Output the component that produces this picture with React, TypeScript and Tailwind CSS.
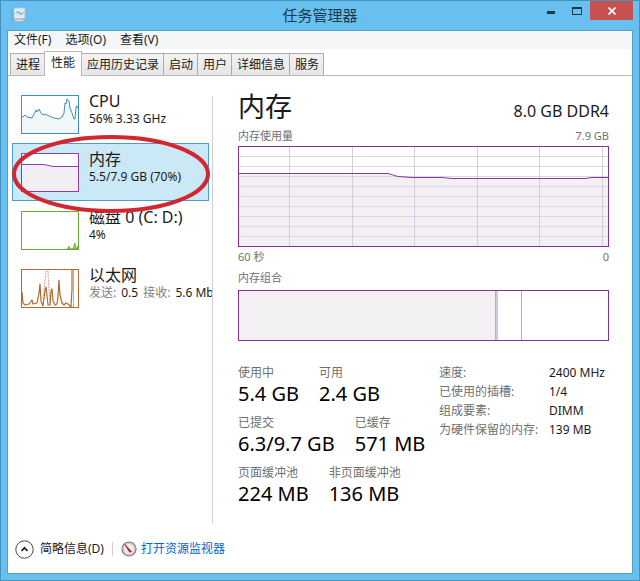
import type { ReactNode } from "react";

const menus = ["文件(F)", "选项(O)", "查看(V)"];

const tabs = ["进程", "性能", "应用历史记录", "启动", "用户", "详细信息", "服务"];

const stats = [
  [
    { label: "使用中", value: "5.4 GB" },
    { label: "可用", value: "2.4 GB" },
  ],
  [
    { label: "已提交", value: "6.3/9.7 GB" },
    { label: "已缓存", value: "571 MB" },
  ],
  [
    { label: "页面缓冲池", value: "224 MB" },
    { label: "非页面缓冲池", value: "136 MB" },
  ],
];

const details = [
  ["速度:", "2400 MHz"],
  ["已使用的插槽:", "1/4"],
  ["组成要素:", "DIMM"],
  ["为硬件保留的内存:", "139 MB"],
];

const AppIcon = () => (
  <svg width="16" height="16" viewBox="0 0 16 16" fill="none">
    <path d="M1.500 4v10M3.500 6v8" stroke="#7f97a5" strokeDasharray="2 1" />
    <path d="M4 12h9l1 2.500H5z" fill="#d5dadd" stroke="#9aa7ae" strokeWidth="0.6" />
    <rect x="4" y="1" width="11" height="10.5" rx="1" fill="#eceff0" stroke="#b3bbc0" />
    <rect x="6" y="3" width="7.500" height="6.500" fill="#d3e8f2" />
    <path d="M6 6.500l2-2 2 2.500 1.500 0 2-1.500" stroke="#4a9ac4" />
  </svg>
);

const GaugeIcon = () => (
  <svg width="16" height="16" viewBox="0 0 16 16" fill="none">
    <circle cx="8" cy="8" r="7" fill="#f3eeeb" stroke="#77797c" strokeWidth="1.2" />
    <circle cx="8" cy="8" r="5.500" stroke="#cdb9b2" />
    <path d="M3.600 3.200l7 7.400-2 .6z" fill="#c4202c" stroke="#c4202c" strokeWidth="0.8" />
  </svg>
);

const Thumb = ({ color, children }: { color: string; children: ReactNode }) => (
  <svg
    className="shrink-0"
    width="58"
    height="39"
    viewBox="0 0 58 39"
    fill="none"
    stroke={color}
    strokeLinejoin="round"
  >
    <rect x="0.5" y="0.5" width="57" height="38" fill="#fff" />
    {children}
    <rect x="0.5" y="0.5" width="57" height="38" />
  </svg>
);

const CpuThumb = () => (
  <Thumb color="#3c8fb5">
    <path
      d="M0 21L2 22L4 20L6 22L11 23L13 19L15 15L16 17L18 14L20 18L22 20L24 19L28 21L33 23L38 24L41 22L43 18L44 8L45 9L46 4L48 6L49 13L51 18L53 24L54 24L55 12L56 11L58 15V39H0z"
      fill="#f1f6f9"
    />
  </Thumb>
);

const MemoryThumb = () => (
  <Thumb color="#8a3fa8">
    <path d="M0 11.500H23L32 13.500H58V39H0z" fill="#f2eff4" />
  </Thumb>
);

const DiskThumb = () => (
  <Thumb color="#69a832">
    <path d="M46 38L48 35L49 38H52L54 32L55 38L57 35V38z" fill="#a5cf80" strokeWidth="0.8" />
  </Thumb>
);

const NetworkThumb = () => (
  <Thumb color="#b0692f">
    <path d="M22 30L24 12L25 2L27 2L28 22L29 34" stroke="#dd9c96" strokeDasharray="2 1" />
    <path
      d="M1 23L2 34L4 36L8 35L11 31L12 35L16 34L18 24L19 15L20 32L22 37L24 22L25 18L27 36L29 36L30 22L31 20L32 32L34 36L36 35L37 28L38 11L39 26L41 34L43 36L45 34L47 35L50 38L51 20V1"
      strokeWidth="1.2"
    />
    <path d="M52.500 1V38" strokeWidth="0.6" />
  </Thumb>
);

type ResourceProps = {
  title: string;
  detail: ReactNode;
  thumb: ReactNode;
  active?: boolean;
  children?: ReactNode;
};

const Resource = ({ title, detail, thumb, active, children }: ResourceProps) => (
  <li className="relative">
    <button
      type="button"
      className={
        active
          ? "flex h-[58px] w-full items-start gap-[10px] border border-[#4a9fca] bg-[#cbe8f6] pt-[9px] pl-2 text-left"
          : "flex h-[58px] w-full items-start gap-[10px] border border-transparent pt-[9px] pl-2 text-left"
      }
    >
      {thumb}
      <span className="-mt-1 block whitespace-nowrap">
        <span className="block text-base leading-5">{title}</span>
        <span className="flex gap-[5px] text-xs leading-4">{detail}</span>
      </span>
    </button>
    {children}
  </li>
);

const UsageChart = () => (
  <svg
    className="block h-[101px] w-full"
    viewBox="0 0 371 101"
    preserveAspectRatio="none"
    fill="none"
    role="img"
    aria-label="内存使用量"
  >
    <rect width="371" height="101" fill="#fff" />
    <path d="M0 27.500H150L160 30.500L174 31.500H204L214 32.500H347L354 31.500H371V101H0z" fill="#f3f0f4" />
    <path
      d="M0 10.500H371M0 20.500H371M0 30.500H371M0 40.500H371M0 50.500H371M0 60.500H371M0 70.500H371M0 80.500H371M0 90.500H371"
      stroke="#e2d3e8"
    />
    <path
      d="M51.500 0V101M114.500 0V101M176.500 0V101M239.500 0V101M301.500 0V101M364.500 0V101"
      stroke="#d8cddd"
    />
    <path d="M0 27.500H150L160 30.500L174 31.500H204L214 32.500H347L354 31.500H371" stroke="#7d3f98" />
    <rect x="0.5" y="0.5" width="370" height="100" stroke="#842f9c" />
  </svg>
);

const CompositionChart = () => (
  <svg
    className="block h-[51px] w-full"
    viewBox="0 0 371 51"
    preserveAspectRatio="none"
    fill="none"
    role="img"
    aria-label="内存组合"
  >
    <rect width="371" height="51" fill="#fff" />
    <rect width="257" height="51" fill="#f3f0f4" />
    <rect x="257" width="3" height="51" fill="#d6c5dc" />
    <path d="M257.500 0V51M283.500 0V51" stroke="#bfa6c9" />
    <rect x="0.5" y="0.5" width="370" height="50" stroke="#842f9c" />
  </svg>
);

const TitleBar = () => (
  <header className="grid h-[29px] grid-cols-[1fr_auto_1fr] items-start">
    <div className="pt-[6px] pl-[9px]">
      <AppIcon />
    </div>
    <h1 className="text-[15px] leading-7 text-[#1b3a4c]">任务管理器</h1>
    <div className="flex items-start justify-end pr-[6px]">
      <button type="button" aria-label="最小化" className="flex h-[19px] w-[26px] items-center justify-center">
        <span className="mt-1 h-[3px] w-2 bg-[#16394e]" />
      </button>
      <button type="button" aria-label="最大化" className="flex h-[19px] w-[26px] items-center justify-center">
        <span className="h-2 w-[10px] border border-t-2 border-[#16394e]" />
      </button>
      <button type="button" aria-label="关闭" className="flex h-[19px] w-[43px] items-center justify-center bg-[#c75050]">
        <svg width="8" height="8" viewBox="0 0 8 8" stroke="#fff" strokeWidth="1.6">
          <path d="M0.500 0.500l7 7M7.500 0.500l-7 7" />
        </svg>
      </button>
    </div>
  </header>
);

const Tabs = () => (
  <div role="tablist" className="flex h-[27px] items-end border-b border-[#b9b9b9] pl-[2px]">
    {tabs.map((tab) => (
      <button
        key={tab}
        type="button"
        role="tab"
        aria-selected={tab === "性能"}
        className={
          tab === "性能"
            ? "z-10 -mb-px -ml-px h-[25px] border border-b-0 border-[#b9b9b9] bg-white px-[6px] pb-[2px] text-xs"
            : "-ml-px h-[22px] border border-b-0 border-[#acacac] bg-linear-to-b from-[#f3f3f3] to-[#e6e6e6] pr-1 pl-[5px] text-xs first:ml-0"
        }
      >
        {tab}
      </button>
    ))}
  </div>
);

const App = () => {
  return (
    <div className="flex min-h-screen flex-col border border-[#4791bf] bg-[#68c0f0] font-['Noto_Sans','Noto_Sans_CJK_SC',sans-serif] text-[#1a1a1a]">
      <TitleBar />
      <div className="mx-[6px] mb-[6px] flex flex-1 flex-col border border-[#559fc9] bg-white">
        <nav className="flex h-[18px] items-center gap-[14px] bg-[#f4f6f8] pl-[6px] text-xs">
          {menus.map((menu) => (
            <button key={menu} type="button">
              {menu}
            </button>
          ))}
        </nav>
        <Tabs />

        <div className="flex flex-1">
          <ul className="w-[204px] shrink-0 overflow-x-clip pt-[9px] pr-[3px] pl-1">
            <Resource title="CPU" detail="56% 3.33 GHz" thumb={<CpuThumb />} />
            <Resource title="内存" detail="5.5/7.9 GB (70%)" thumb={<MemoryThumb />} active>
              <svg
                className="pointer-events-none absolute -top-[9px] left-0 z-10"
                width="200"
                height="80"
                viewBox="0 0 200 80"
                fill="none"
              >
                <ellipse cx="99" cy="40" rx="97" ry="37" stroke="#d22630" strokeWidth="4" />
              </svg>
            </Resource>
            <Resource title="磁盘 0 (C: D:)" detail="4%" thumb={<DiskThumb />} />
            <Resource
              title="以太网"
              detail={
                <>
                  <span className="text-[#808080]">发送:</span>
                  <span>0.5</span>
                  <span className="text-[#808080]">接收:</span>
                  <span>5.6 Mb</span>
                </>
              }
              thumb={<NetworkThumb />}
            />
          </ul>
          <div className="mt-5 w-px bg-[#cfcfcf]" />

          <main className="min-w-0 flex-1 pt-[11px] pr-[23px] pl-[25px]">
            <div className="flex h-[39px] items-center justify-between">
              <h2 className="text-[27px] leading-10">内存</h2>
              <span className="pt-2 text-base leading-6">8.0 GB DDR4</span>
            </div>
            <div className="flex justify-between text-[11px] leading-5 text-[#707070]">
              <span>内存使用量</span>
              <span>7.9 GB</span>
            </div>
            <UsageChart />
            <div className="flex justify-between text-[11px] leading-5 text-[#707070]">
              <span>60 秒</span>
              <span>0</span>
            </div>
            <div className="pt-px pb-[2px] text-[11px] leading-5 text-[#707070]">内存组合</div>
            <CompositionChart />

            <div className="mt-[22px] grid grid-cols-[201px_1fr] items-start">
              <div className="flex flex-col gap-2">
                {stats.map((row) => (
                  <dl key={row[0].label} className="flex gap-5 whitespace-nowrap">
                    {row.map((stat) => (
                      <div key={stat.label}>
                        <dt className="text-xs leading-5 text-[#707070]">{stat.label}</dt>
                        <dd className="text-xl leading-[22px] text-black">{stat.value}</dd>
                      </div>
                    ))}
                  </dl>
                ))}
              </div>
              <table className="text-left text-xs leading-[19px] whitespace-nowrap">
                <tbody>
                  {details.map(([label, value]) => (
                    <tr key={label}>
                      <th scope="row" className="w-[110px] p-0 font-normal text-[#707070]">
                        {label}
                      </th>
                      <td className="p-0">{value}</td>
                    </tr>
                  ))}
                </tbody>
              </table>
            </div>
          </main>
        </div>

        <footer className="flex h-[50px] items-center pt-[2px] pl-[7px]">
          <button type="button" className="flex items-center gap-[6px] text-xs">
            <svg width="19" height="19" viewBox="0 0 19 19" fill="none">
              <circle cx="9.5" cy="9.5" r="8.7" stroke="#444" />
              <path d="M6.500 11l3-3.200 3 3.200" stroke="#222" strokeWidth="1.8" />
            </svg>
            简略信息(D)
          </button>
          <span className="mx-2 h-[14px] w-px bg-[#d0d0d0]" />
          <a href="#resmon" className="flex items-center gap-1 text-xs text-[#0066cc]">
            <GaugeIcon />
            打开资源监视器
          </a>
        </footer>
      </div>
    </div>
  );
};

export default App;
